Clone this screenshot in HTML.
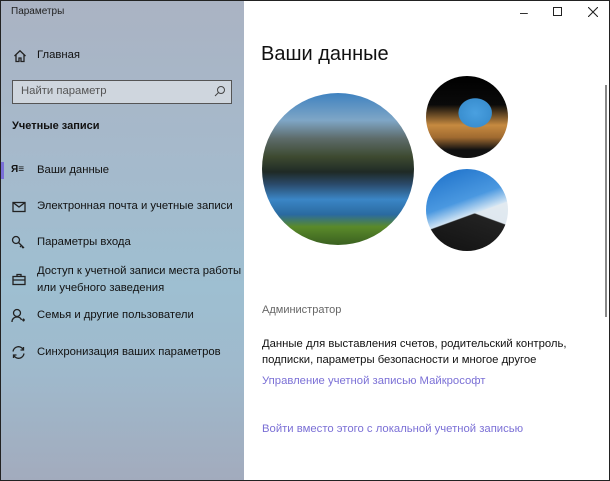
<!DOCTYPE html>
<html><head><meta charset="utf-8"><style>
*{margin:0;padding:0;box-sizing:border-box}
body{width:610px;height:481px;overflow:hidden;font-family:"Liberation Sans","DejaVu Sans",sans-serif;background:#fff;position:relative}
.win{position:absolute;left:0;top:0;width:610px;height:481px;border:1px solid #222;}
.side{position:absolute;left:1px;top:1px;width:243px;height:479px;background:linear-gradient(180deg,#aab3c3 0%,#a6b9cb 30%,#9ebfd1 60%,#9fb9cc 78%,#a2abbd 100%)}
.t{position:absolute;white-space:nowrap;color:#111}
.s{font-size:11.3px}
.ic{position:absolute}
.link{color:#7b70d6;font-size:11.3px}
.circ{position:absolute;border-radius:50%;overflow:hidden}
</style></head><body>
<div class="side"></div>
<div class="t" style="left:11px;top:6px;font-size:10px;color:#222">Параметры</div>
<svg class="ic" style="left:13px;top:49px" width="14" height="14" viewBox="0 0 14 14" fill="none" stroke="#222" stroke-width="1.3"><path d="M1.5 7 7 1.8 12.5 7M3 5.8V12.5h3V9h2v3.5h3V5.8"/></svg>
<div class="t s" style="left:37px;top:49px">Главная</div>
<div style="position:absolute;left:12px;top:80px;width:220px;height:24px;border:1px solid #555;background:#cfd6de"></div>
<div class="t" style="left:21px;top:85px;font-size:11.3px;color:#555">Найти параметр</div>
<svg class="ic" style="left:214px;top:85px" width="12" height="12" viewBox="0 0 12 12" fill="none" stroke="#444" stroke-width="1"><circle cx="7" cy="5" r="3.5"/><path d="M4.5 7.5 1 11"/></svg>
<div class="t" style="left:12px;top:120px;font-size:11px;font-weight:bold">Учетные записи</div>
<div style="position:absolute;left:1px;top:162px;width:3px;height:17px;background:#7a6fd8"></div>
<div class="t" style="left:11px;top:164px;font-size:10px;font-weight:bold">&#1071;&#8801;</div>
<div class="t s" style="left:37px;top:164px">Ваши данные</div>
<svg class="ic" style="left:12px;top:201px" width="14" height="12" viewBox="0 0 14 12" fill="none" stroke="#222" stroke-width="1.3"><rect x="1" y="1.5" width="12" height="9"/><path d="M1 1.5 7 6l6-4.5"/></svg>
<div class="t s" style="left:37px;top:200px">Электронная почта и учетные записи</div>
<svg class="ic" style="left:11px;top:235px" width="15" height="15" viewBox="0 0 15 15" fill="none" stroke="#222" stroke-width="1.3"><circle cx="5" cy="5" r="3.5"/><path d="M7.5 7.5 13 13M10.5 10.5 9 12M12 12l-1 1"/></svg>
<div class="t s" style="left:37px;top:236px">Параметры входа</div>
<svg class="ic" style="left:12px;top:273px" width="14" height="13" viewBox="0 0 14 13" fill="none" stroke="#222" stroke-width="1.3"><rect x="1" y="3.5" width="12" height="8"/><path d="M5 3.5V1.5h4v2M1 7h12"/></svg>
<div class="t s" style="left:37px;top:265px">Доступ к учетной записи места работы</div>
<div class="t s" style="left:37px;top:282px">или учебного заведения</div>
<svg class="ic" style="left:11px;top:308px" width="15" height="15" viewBox="0 0 15 15" fill="none" stroke="#222" stroke-width="1.3"><circle cx="6" cy="5" r="3.5"/><path d="M1 14c0-3 2-5 5-5s4 1.5 4.5 3M11 12h3M12.5 10.5v3"/></svg>
<div class="t s" style="left:37px;top:309px">Семья и другие пользователи</div>
<svg class="ic" style="left:11px;top:345px" width="15" height="15" viewBox="0 0 15 15" fill="none" stroke="#222" stroke-width="1.3"><path d="M2 6.5A5.5 5.5 0 0 1 12.5 5M13 8.5A5.5 5.5 0 0 1 2.5 10M12.5 2v3h-3M2.5 13v-3h3"/></svg>
<div class="t s" style="left:37px;top:346px">Синхронизация ваших параметров</div>

<div class="t" style="left:520px;top:4px;font-size:14px;color:#222">&#8211;</div>
<div style="position:absolute;left:553px;top:7px;width:9px;height:9px;border:1px solid #222"></div>
<svg class="ic" style="left:588px;top:7px" width="10" height="10" viewBox="0 0 10 10" stroke="#222" stroke-width="1.1"><path d="M0 0 10 10M10 0 0 10"/></svg>
<div style="position:absolute;left:605px;top:85px;width:2px;height:232px;background:#888"></div>

<div class="t" style="left:261px;top:43px;font-size:20px;color:#111">Ваши данные</div>
<div class="circ" style="left:262px;top:93px;width:152px;height:152px;background:linear-gradient(180deg,#3f82c0 0%,#7fa6c6 18%,#5d6b6a 30%,#3d4a30 42%,#1f2a26 52%,#2a4a6a 60%,#3b86c6 70%,#2a6aa0 80%,#5a8a2a 88%,#3a6020 100%)"></div>
<div class="circ" style="left:426px;top:76px;width:82px;height:82px;background:radial-gradient(ellipse 40% 35% at 60% 45%,#4aa0e0 0%,#3a8fd0 50%,transparent 52%),linear-gradient(180deg,#000 0%,#0a0a0a 35%,#c68a40 60%,#a06a30 75%,#111 90%)"></div>
<div class="circ" style="left:426px;top:169px;width:82px;height:82px;background:linear-gradient(160deg,#1a6ec8 0%,#4a98e0 40%,#cfe3f3 55%,transparent 56%),linear-gradient(200deg,#e8eef4 0%,#dfe8ef 50%,#222 51%,#111 100%)"></div>

<div class="t" style="left:262px;top:304px;font-size:11px;color:#666">Администратор</div>
<div class="t s" style="left:262px;top:338px">Данные для выставления счетов, родительский контроль,</div>
<div class="t s" style="left:262px;top:354px">подписки, параметры безопасности и многое другое</div>
<div class="t link" style="left:262px;top:375px">Управление учетной записью Майкрософт</div>
<div class="t link" style="left:262px;top:423px">Войти вместо этого с локальной учетной записью</div>
<div class="win"></div>
</body></html>
